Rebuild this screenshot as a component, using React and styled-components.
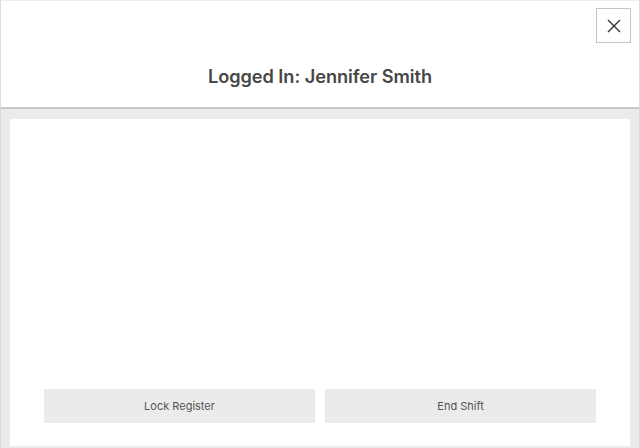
import React from 'react';
import styled, { createGlobalStyle } from 'styled-components';

const GlobalStyle = createGlobalStyle`
  html, body {
    margin: 0;
    padding: 0;
    background: #ffffff;
  }
  * {
    box-sizing: border-box;
  }
`;

const Frame = styled.div`
  width: 640px;
  height: 448px;
  display: flex;
  flex-direction: column;
  border-left: 1px solid #dcdcdc;
  border-right: 1px solid #dcdcdc;
  border-top: 1px solid #ececec;
  font-family: Inter, 'Liberation Sans', sans-serif;
  overflow: hidden;
`;

const Header = styled.header`
  position: relative;
  height: 108px;
  flex-shrink: 0;
  display: flex;
  align-items: center;
  justify-content: center;
  padding-top: 44px;
  background: #ffffff;
  border-bottom: 2px solid #c9c9c9;
`;

const Title = styled.h1`
  margin: 0;
  font-size: 18.2px;
  font-weight: 600;
  color: #474747;
  letter-spacing: -0.05px;
`;

const CloseButton = styled.button`
  position: absolute;
  top: 7px;
  right: 8px;
  width: 35px;
  height: 35px;
  padding: 0;
  display: flex;
  align-items: center;
  justify-content: center;
  background: #ffffff;
  border: 1px solid #c4c4c4;
  cursor: pointer;
`;

const Body = styled.main`
  flex: 1;
  display: flex;
  padding: 10px 9px 2px 9px;
  background: #ebebeb;
`;

const Panel = styled.section`
  flex: 1;
  display: flex;
  flex-direction: column;
  justify-content: flex-end;
  padding: 0 34px 23px;
  background: #ffffff;
`;

const Actions = styled.div`
  display: grid;
  grid-template-columns: 1fr 1fr;
  gap: 10px;
`;

const ActionButton = styled.button`
  height: 34px;
  border: none;
  background: #ebebeb;
  color: #555555;
  font-family: Inter, 'Liberation Sans', sans-serif;
  font-size: 11px;
  cursor: pointer;
`;

const App = () => (
  <>
    <GlobalStyle />
    <Frame>
      <Header>
        <Title>Logged In: Jennifer Smith</Title>
        <CloseButton aria-label="Close">
          <svg width="14" height="14" viewBox="0 0 14 14">
            <path d="M1 1 L13 13 M13 1 L1 13" stroke="#333" strokeWidth="1.4" fill="none" />
          </svg>
        </CloseButton>
      </Header>
      <Body>
        <Panel>
          <Actions>
            <ActionButton>Lock Register</ActionButton>
            <ActionButton>End Shift</ActionButton>
          </Actions>
        </Panel>
      </Body>
    </Frame>
  </>
);

export default App;
